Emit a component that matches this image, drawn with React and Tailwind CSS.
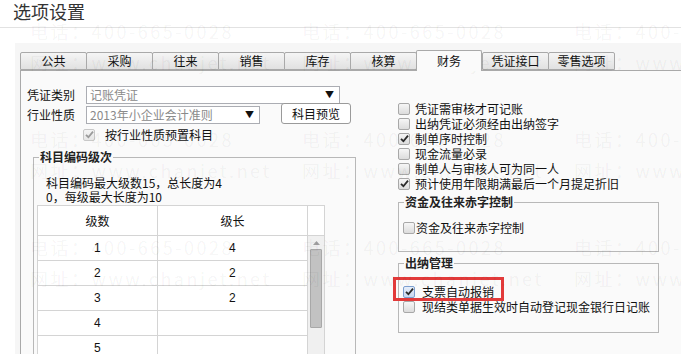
import React from "react";

const tabs = ["公共", "采购", "往来", "销售", "库存", "核算", "财务", "凭证接口", "零售选项"];

const Check = ({ checked, disabled, focus }) => (
  <span
    className={`flex h-[12px] w-[12px] shrink-0 items-center justify-center rounded-[2px] border ${
      focus
        ? "border-[#7c9fd0] bg-gradient-to-b from-[#e6eefa] to-[#c9d8ef]"
        : disabled
        ? "border-[#c8c8c8] bg-gradient-to-b from-[#f4f4f4] to-[#e6e6e6]"
        : "border-[#a8a8a8] bg-gradient-to-b from-[#f6f6f6] to-[#dcdcdc]"
    }`}
  >
    {checked && (
      <svg width="9" height="9" viewBox="0 0 9 9">
        <path
          d="M1 4.8 L3.4 7.2 L8 1.6"
          fill="none"
          stroke={disabled ? "#9a9a9a" : "#2a2a2a"}
          strokeWidth="1.8"
        />
      </svg>
    )}
  </span>
);

// group box with its caption sitting on the top border
const Group = ({ title, className, children }) => (
  <div className={className}>
    <div className="flex h-[14px] items-center">
      <div className="w-[6px] border-t border-[#b8b8b8]" />
      <span className="px-[1px] text-[12px] font-bold leading-[14px] text-[#222]">{title}</span>
      <div className="flex-1 border-t border-[#b8b8b8]" />
    </div>
    <div className="-mt-[7px] border-x border-b border-[#b8b8b8] pt-[7px]">{children}</div>
  </div>
);

const rows = [
  ["1", "4"],
  ["2", "2"],
  ["3", "2"],
  ["4", ""],
  ["5", ""],
];

const options = [
  ["凭证需审核才可记账", false],
  ["出纳凭证必须经由出纳签字", false],
  ["制单序时控制", true],
  ["现金流量必录", false],
  ["制单人与审核人可为同一人", false],
  ["预计使用年限期满最后一个月提足折旧", true],
];

export default function App() {
  const marks = [];
  [31, 139, 247].forEach((y) => {
    [30, 302, 574].forEach((x) => {
      marks.push({ x, y: y - 11, t: "电话：400-665-0028" });
      marks.push({ x, y: y + 20, t: "网址：www.chanjet.net" });
    });
  });

  return (
    <div
      className="relative flex h-[354px] w-[681px] flex-col overflow-hidden bg-white text-[12px] text-[#111]"
      style={{ fontFamily: '"Noto Sans CJK SC", "Liberation Sans", sans-serif' }}
    >
      {/* title */}
      <div className="h-[28px] shrink-0 border-b border-[#e2e2e2] pl-[13px] text-[18px] leading-[22px] text-[#333]">
        选项设置
      </div>

      <div className="ml-[15px] mt-[15px] flex flex-1 flex-col bg-[#f6f6f6] pt-[7px]">
        {/* tabs */}
        <div className="ml-[5px] flex h-[20px] items-end">
          {tabs.map((t) =>
            t === "财务" ? (
              <div
                key={t}
                className="relative z-10 -mb-[1px] flex h-[21px] w-[66px] items-center justify-center rounded-t-[2px] border-x border-t border-[#a9a9a9] bg-[#fafafa]"
              >
                {t}
              </div>
            ) : (
              <div
                key={t}
                className="-mr-[1px] flex h-[18px] w-[67px] items-center justify-center rounded-t-[2px] border border-[#a9a9a9] bg-gradient-to-b from-[#f5f5f5] to-[#e1e1e1]"
              >
                {t}
              </div>
            )
          )}
        </div>

        {/* content panel */}
        <div className="ml-[5px] flex flex-1 border-l border-t border-[#a9a9a9] bg-[#fafafa]">
          {/* left column */}
          <div className="flex w-[336px] shrink-0 flex-col pt-[15px]">
            <div className="flex h-[18px] items-center">
              <span className="w-[65px] pl-[6px]">凭证类别</span>
              <div className="flex h-[18px] w-[254px] items-center justify-between border border-[#abadb3] bg-white pl-[3px] pr-[5px] text-[#8a8a8a]">
                <span>记账凭证</span>
                <span className="text-[9px] text-[#111]">▼</span>
              </div>
            </div>
            <div className="flex h-[20px] items-end">
              <span className="w-[65px] pl-[6px] leading-[18px]">行业性质</span>
              <div className="flex h-[18px] w-[174px] items-center justify-between border border-[#abadb3] bg-white pl-[3px] pr-[5px] text-[#8a8a8a]">
                <span>2013年小企业会计准则</span>
                <span className="text-[9px] text-[#111]">▼</span>
              </div>
              <button className="ml-[21px] flex h-[21px] w-[70px] items-center justify-center rounded-[3px] border border-[#9a9a9a] bg-white text-[12px]">
                科目预览
              </button>
            </div>
            <div className="mt-[4px] flex h-[13px] items-center">
              <span className="ml-[62px]">
                <Check checked disabled />
              </span>
              <span className="ml-[10px]">按行业性质预置科目</span>
            </div>

            <Group title="科目编码级次" className="ml-[12px] mt-[9px] w-[323px] flex-1">
              <div className="mt-[12px] pl-[12px] leading-[14px]">
                科目编码最大级数15，总长度为4
                <br />
                0，每级最大长度为10
              </div>
              <div className="ml-[3px] mt-[1px] w-[288px] border border-[#d4d4d4] bg-white">
                <div className="flex h-[30px] border-b border-[#d4d4d4]">
                  <div className="flex w-[120px] items-center justify-center border-r border-[#d4d4d4]">级数</div>
                  <div className="flex w-[150px] items-center justify-center border-r border-[#d4d4d4]">级长</div>
                </div>
                <div className="flex">
                  <div className="w-[270px] border-r border-[#d4d4d4]">
                    {rows.map(([a, b]) => (
                      <div key={a} className="flex h-[25px] border-b border-[#d4d4d4] font-['Liberation_Sans'] text-[12px]">
                        <div className="flex w-[120px] items-center justify-center border-r border-[#d4d4d4]">{a}</div>
                        <div className="flex w-[150px] items-center justify-center">{b}</div>
                      </div>
                    ))}
                  </div>
                  <div className="flex w-[17px] flex-col items-center bg-[#f0f0f0] pt-[5px]">
                    <svg width="7" height="4" viewBox="0 0 7 4">
                      <path d="M0 4 L3.5 0 L7 4 Z" fill="#a0a0a0" />
                    </svg>
                    <div className="mt-[4px] h-[79px] w-[12px] rounded-[1px] border border-[#a8a8a8] bg-[#c2c2c2]" />
                  </div>
                </div>
              </div>
            </Group>
          </div>

          {/* right column */}
          <div className="ml-[41px] flex w-[261px] flex-col pt-[30px]">
            {options.map(([t, c]) => (
              <div key={t} className="flex h-[15px] items-center">
                <Check checked={c} />
                <span className="ml-[5px]">{t}</span>
              </div>
            ))}

            <Group title="资金及往来赤字控制" className="mt-[4px]">
              <div className="mb-[16px] ml-[4px] mt-[12px] flex h-[14px] items-center">
                <Check />
                <span className="ml-[1px]">资金及往来赤字控制</span>
              </div>
            </Group>

            <Group title="出纳管理" className="mt-[4px]">
              <div className="mb-[18px] ml-[4px] mt-[14px] flex flex-col">
                <div className="relative flex h-[15px] items-center">
                  <Check checked focus />
                  <span className="ml-[7px]">支票自动报销</span>
                  <div className="absolute -left-[10px] -top-[7px] h-[24px] w-[111px] border-[3px] border-[#e23a3a]" />
                </div>
                <div className="flex h-[15px] items-center">
                  <Check />
                  <span className="ml-[7px]">现结类单据生效时自动登记现金银行日记账</span>
                </div>
              </div>
            </Group>
          </div>
        </div>
      </div>

      {/* watermark */}
      <div className="pointer-events-none absolute inset-0">
        {marks.map((m, i) => (
          <span
            key={i}
            className="absolute whitespace-nowrap text-[18px] leading-[22px] tracking-[2.5px] text-[rgba(0,0,0,0.05)]"
            style={{ left: m.x, top: m.y }}
          >
            {m.t}
          </span>
        ))}
      </div>
    </div>
  );
}
